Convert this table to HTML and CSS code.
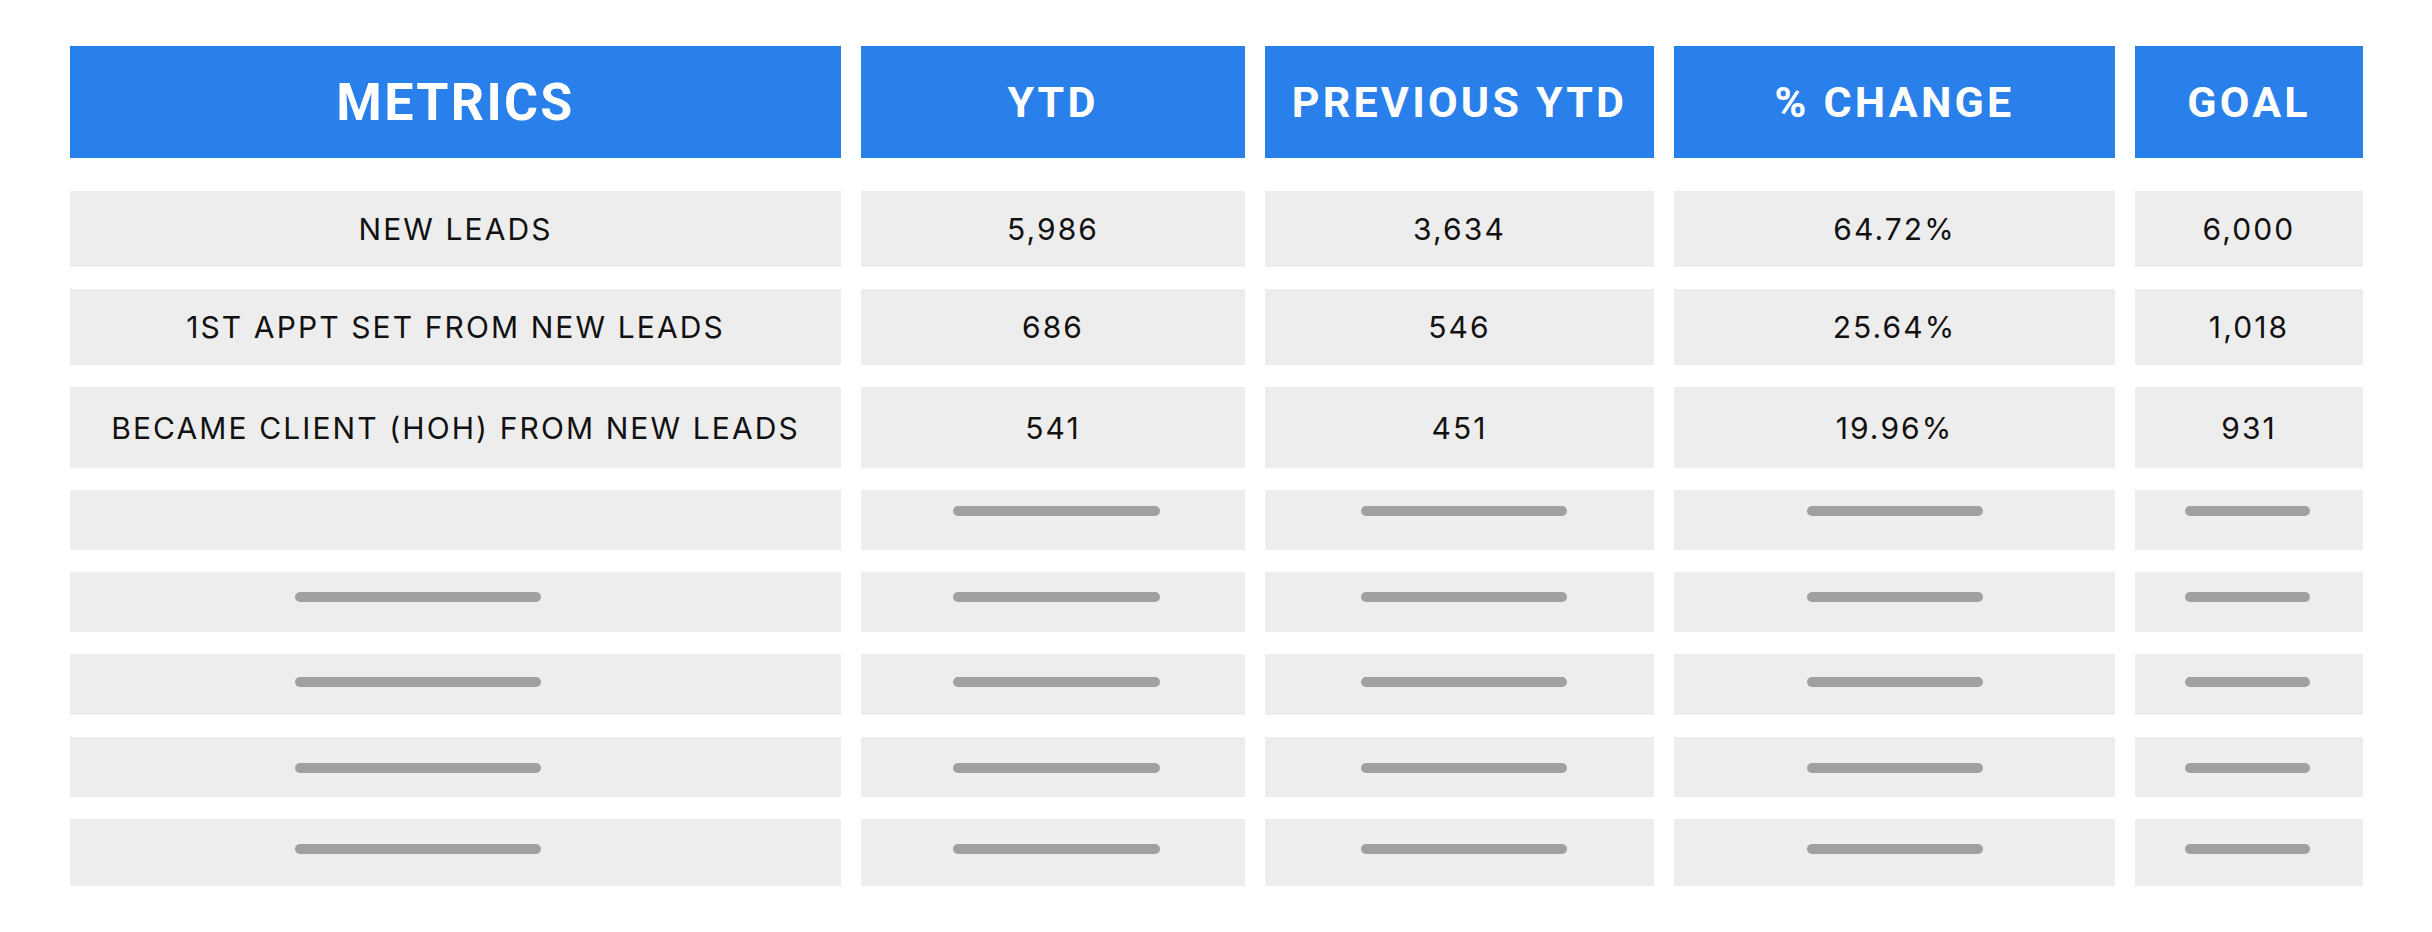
FILE: index.html
```html
<!DOCTYPE html>
<html lang="en">
<head>
<meta charset="utf-8">
<title>Metrics</title>
<link rel="stylesheet" href="styles.css">
</head>
<body>
<div class="table">
  <div class="row head">
    <div class="cell hcell metrics">METRICS</div>
    <div class="cell hcell">YTD</div>
    <div class="cell hcell">PREVIOUS YTD</div>
    <div class="cell hcell">% CHANGE</div>
    <div class="cell hcell">GOAL</div>
  </div>
  <div class="row r1">
    <div class="cell">NEW LEADS</div>
    <div class="cell">5,986</div>
    <div class="cell">3,634</div>
    <div class="cell">64.72%</div>
    <div class="cell">6,000</div>
  </div>
  <div class="row r2">
    <div class="cell">1ST APPT SET FROM NEW LEADS</div>
    <div class="cell">686</div>
    <div class="cell">546</div>
    <div class="cell">25.64%</div>
    <div class="cell">1,018</div>
  </div>
  <div class="row r3">
    <div class="cell">BECAME CLIENT (HOH) FROM NEW LEADS</div>
    <div class="cell">541</div>
    <div class="cell">451</div>
    <div class="cell">19.96%</div>
    <div class="cell">931</div>
  </div>
  <div class="row brow r4">
    <div class="cell"></div>
    <div class="cell"><span class="bar b2"></span></div>
    <div class="cell"><span class="bar b3"></span></div>
    <div class="cell"><span class="bar b4"></span></div>
    <div class="cell"><span class="bar b5"></span></div>
  </div>
  <div class="row brow r5">
    <div class="cell"><span class="bar b1"></span></div>
    <div class="cell"><span class="bar b2"></span></div>
    <div class="cell"><span class="bar b3"></span></div>
    <div class="cell"><span class="bar b4"></span></div>
    <div class="cell"><span class="bar b5"></span></div>
  </div>
  <div class="row brow r6">
    <div class="cell"><span class="bar b1"></span></div>
    <div class="cell"><span class="bar b2"></span></div>
    <div class="cell"><span class="bar b3"></span></div>
    <div class="cell"><span class="bar b4"></span></div>
    <div class="cell"><span class="bar b5"></span></div>
  </div>
  <div class="row brow r7">
    <div class="cell"><span class="bar b1"></span></div>
    <div class="cell"><span class="bar b2"></span></div>
    <div class="cell"><span class="bar b3"></span></div>
    <div class="cell"><span class="bar b4"></span></div>
    <div class="cell"><span class="bar b5"></span></div>
  </div>
  <div class="row brow r8">
    <div class="cell"><span class="bar b1"></span></div>
    <div class="cell"><span class="bar b2"></span></div>
    <div class="cell"><span class="bar b3"></span></div>
    <div class="cell"><span class="bar b4"></span></div>
    <div class="cell"><span class="bar b5"></span></div>
  </div>
</div>
</body>
</html>
```

FILE: styles.css
```css
html, body {
  margin: 0;
  padding: 0;
  background: #ffffff;
}

body {
  font-family: Inter, "Liberation Sans", sans-serif;
  color: #111111;
}

.table {
  display: flex;
  flex-direction: column;
  gap: 22px;
  padding: 46px 0 0 70px;
}

.row {
  display: grid;
  grid-template-columns: 771px 384px 389px 441px 228px;
  column-gap: 20px;
}

.cell {
  background: #ededed;
  display: flex;
  align-items: center;
  justify-content: center;
  font-size: 30px;
  letter-spacing: 0.07em;
  white-space: nowrap;
}

.head {
  height: 112px;
  margin-bottom: 11px;
}

.hcell {
  background: #2980eb;
  color: #ffffff;
  font-family: Roboto, Inter, sans-serif;
  font-weight: 700;
  font-size: 43px;
  letter-spacing: 0.075em;
}

.hcell.metrics {
  font-size: 52px;
  letter-spacing: 0.045em;
}

.r1, .r2 { height: 76px; }
.r3 { height: 81px; }
.r4, .r5, .r7 { height: 60px; }
.r6 { height: 61px; }
.r8 { height: 67px; }

.brow .cell {
  align-items: flex-start;
}

.r4 .cell { padding-top: 16px; }
.r5 .cell { padding-top: 20px; }
.r6 .cell { padding-top: 23px; }
.r7 .cell { padding-top: 26px; }
.r8 .cell { padding-top: 25px; }

.bar {
  display: block;
  height: 10px;
  border-radius: 5px;
  background: #a0a0a0;
}

.b1 { width: 246px; margin-right: 76px; }
.b2 { width: 207px; margin-left: 6px; }
.b3 { width: 206px; margin-left: 8px; }
.b4 { width: 176px; }
.b5 { width: 125px; margin-right: 4px; }
```
